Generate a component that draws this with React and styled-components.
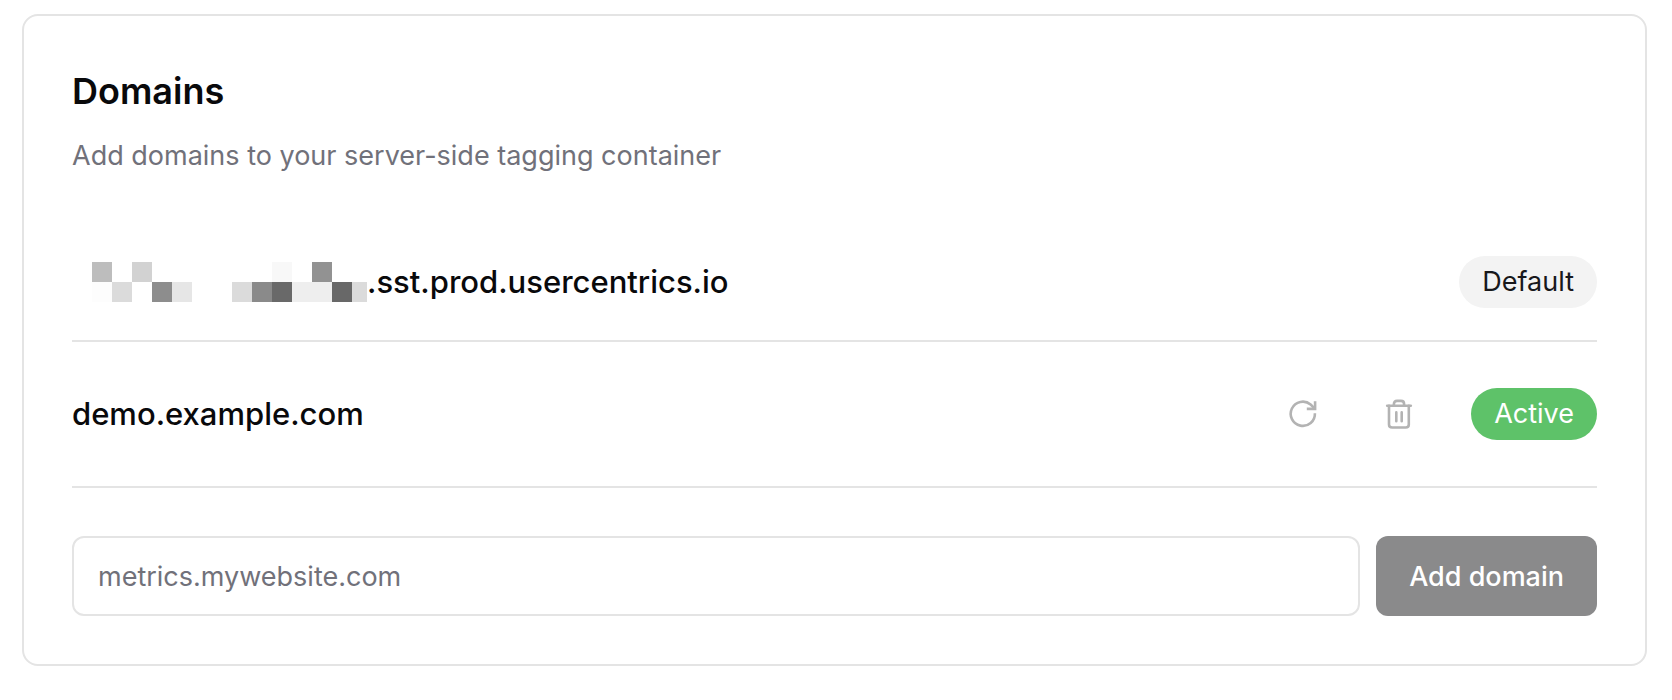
import React, { useState } from 'react'
import styled, { createGlobalStyle } from 'styled-components'


const domains = [
    { name: '.sst.prod.usercentrics.io', status: 'Default', masked: true },
    { name: 'demo.example.com', status: 'Active', editable: true },
]

// grey levels of the hidden container id, one row of blocks per line
const maskBlocks = [
    ['#bdbdbd', '', '#d2d2d2', '', '', '', '', '', '', '#f8f8f8', '', '#929292', '', ''],
    ['#fdfdfd', '#dbdbdb', '', '#8d8d8d', '#e6e6e6', '', '', '#dbdbdb', '#8a8a8a', '#696969', '#eeeeee', '#eeeeee', '#686868', '#dbdbdb'],
]

function RefreshIcon() {
    return (
        <svg width='32' height='32' viewBox='0 0 32 32' fill='none' stroke='currentColor' strokeWidth='2.6' aria-hidden='true'>
            <path d='M27.9 15.2A12.1 12.1 0 1 1 23.6 6.5L27.6 10.4' />
            <path d='M28.1 3.2V10.9H19.8' />
        </svg>
    )
}

function TrashIcon() {
    return (
        <svg width='32' height='32' viewBox='0 0 32 32' fill='none' stroke='currentColor' strokeWidth='2.6' strokeLinecap='round' strokeLinejoin='round' aria-hidden='true'>
            <path d='M4.2 7.7H27.8' />
            <path d='M10.9 7.7V6Q10.9 2.9 14 2.9H18Q21.1 2.9 21.1 6V7.7' />
            <path d='M6 7.7V26.4Q6 29.5 9.1 29.5H22.7Q25.8 29.5 25.8 26.4V7.7' />
            <path d='M13.3 14.4V23.2M18.7 14.4V23.2' />
        </svg>
    )
}

function App() {
    const [domain, setDomain] = useState('')

    return (
        <>
            <GlobalStyle />
            <Card>
                <Header>
                    <h1>Domains</h1>
                    <p>Add domains to your server-side tagging container</p>
                </Header>

                <DomainList>
                    {domains.map((item) => (
                        <DomainRow key={item.name}>
                            <DomainName>
                                {item.masked && (
                                    <Mask aria-hidden='true'>
                                        {maskBlocks.flat().map((color, i) => (
                                            <MaskBlock key={i} $color={color} />
                                        ))}
                                    </Mask>
                                )}
                                {item.name}
                            </DomainName>
                            <Actions>
                                {item.editable && (
                                    <IconGroup>
                                        <IconButton type='button' aria-label='Refresh'>
                                            <RefreshIcon />
                                        </IconButton>
                                        <IconButton type='button' aria-label='Delete'>
                                            <TrashIcon />
                                        </IconButton>
                                    </IconGroup>
                                )}
                                <Badge $active={item.status === 'Active'}>{item.status}</Badge>
                            </Actions>
                        </DomainRow>
                    ))}
                </DomainList>

                <AddForm onSubmit={(e) => e.preventDefault()}>
                    <DomainInput
                        type='text'
                        aria-label='Domain'
                        placeholder='metrics.mywebsite.com'
                        value={domain}
                        onChange={(e) => setDomain(e.target.value)}
                    />
                    <AddButton type='submit' disabled={!domain}>Add domain</AddButton>
                </AddForm>
            </Card>
        </>
    )
}

const GlobalStyle = createGlobalStyle`
    *{
        box-sizing: border-box;
    }

    body{
        margin: 0;
        background: #ffffff;
        color: #09090b;
        font-family: Inter, 'Liberation Sans', sans-serif;
    }

    button, input{
        font-family: inherit;
    }
`

const Card = styled.main`
    margin: 14px 25px 34px 22px;
    padding: 48px;
    border: 2px solid #e4e4e4;
    border-radius: 16px;
`

const Header = styled.header`
    h1{
        margin: 0;
        font-size: 36px;
        line-height: 54px;
        font-weight: 600;
    }

    p{
        margin: 18px 0 0;
        font-size: 27px;
        line-height: 40px;
        color: #71717a;
    }
`

const DomainList = styled.ul`
    list-style: none;
    margin: 48px 0;
    padding: 0;
`

const DomainRow = styled.li`
    display: flex;
    align-items: center;
    justify-content: space-between;
    padding: 32px 0;
    border-bottom: 2px solid #e4e4e4;
`

const DomainName = styled.div`
    display: flex;
    align-items: center;
    font-size: 31px;
    line-height: 48px;
    font-weight: 500;
`

const Mask = styled.div`
    display: grid;
    grid-template-columns: repeat(13, 20px) 15px;
    grid-auto-rows: 20px;
    padding-left: 20px;
`

const MaskBlock = styled.div`
    background: ${({ $color }) => $color || 'transparent'};
`

const Actions = styled.div`
    display: flex;
    align-items: center;
    gap: 32px;
`

const IconGroup = styled.div`
    display: flex;
    gap: 16px;
`

const IconButton = styled.button`
    display: flex;
    align-items: center;
    justify-content: center;
    width: 80px;
    height: 80px;
    padding: 0;
    border: none;
    background: none;
    color: #b3b3b3;
    cursor: pointer;
`

const Badge = styled.span`
    padding: 0 23px;
    border-radius: 26px;
    font-size: 27px;
    line-height: 52px;
    background: ${({ $active }) => ($active ? '#5ec269' : '#f3f3f3')};
    color: ${({ $active }) => ($active ? '#ffffff' : '#18181b')};
`

const AddForm = styled.form`
    display: flex;
    gap: 16px;
`

const DomainInput = styled.input`
    flex: 1;
    min-width: 0;
    height: 80px;
    padding: 0 24px;
    border: 2px solid #e4e4e4;
    border-radius: 12px;
    font-size: 27px;
    color: #09090b;

    &::placeholder{
        color: #71717a;
        opacity: 1;
    }
`

const AddButton = styled.button`
    height: 80px;
    padding: 0 33px;
    border: none;
    border-radius: 12px;
    background: #8a8a8b;
    color: #ffffff;
    font-size: 27px;
    font-weight: 500;
`

export default App
